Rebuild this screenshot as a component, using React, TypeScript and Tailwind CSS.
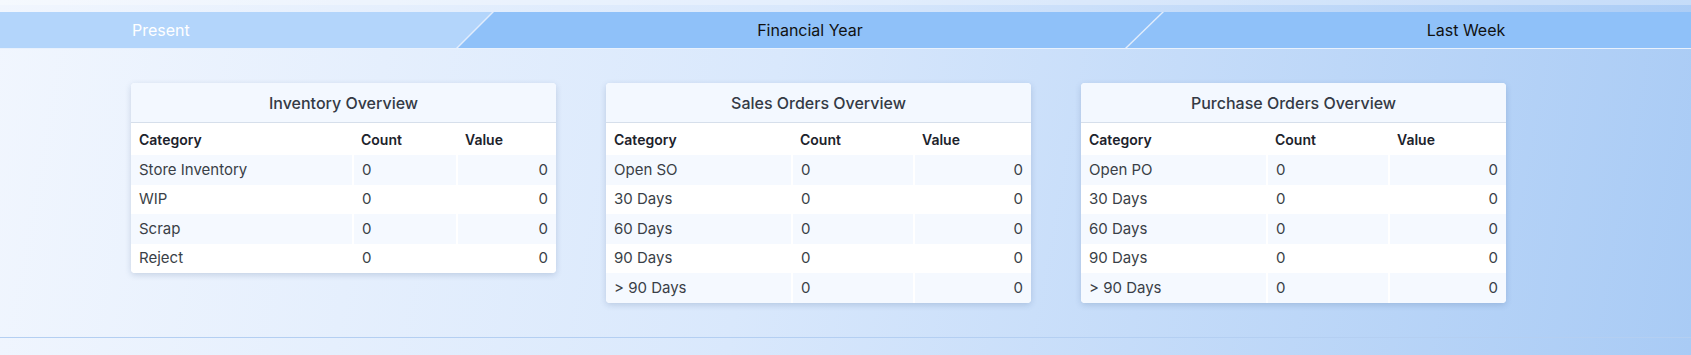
import React from "react";

type Row = { label: string; count: number; value: number };

// Kartendaten
const CARDS: { title: string; cols: [string, string, string]; rows: Row[] }[] = [
  {
    title: "Inventory Overview",
    cols: ["w-[222px]", "w-[104px]", "w-[99px]"],
    rows: [
      { label: "Store Inventory", count: 0, value: 0 },
      { label: "WIP", count: 0, value: 0 },
      { label: "Scrap", count: 0, value: 0 },
      { label: "Reject", count: 0, value: 0 },
    ],
  },
  {
    title: "Sales Orders Overview",
    cols: ["w-[186px]", "w-[122px]", "w-[117px]"],
    rows: [
      { label: "Open SO", count: 0, value: 0 },
      { label: "30 Days", count: 0, value: 0 },
      { label: "60 Days", count: 0, value: 0 },
      { label: "90 Days", count: 0, value: 0 },
      { label: "> 90 Days", count: 0, value: 0 },
    ],
  },
  {
    title: "Purchase Orders Overview",
    cols: ["w-[186px]", "w-[122px]", "w-[117px]"],
    rows: [
      { label: "Open PO", count: 0, value: 0 },
      { label: "30 Days", count: 0, value: 0 },
      { label: "60 Days", count: 0, value: 0 },
      { label: "90 Days", count: 0, value: 0 },
      { label: "> 90 Days", count: 0, value: 0 },
    ],
  },
];

function OverviewCard({ title, cols, rows }: (typeof CARDS)[number]) {
  return (
    <div className="w-[425px] shrink-0 overflow-hidden rounded-[4px] bg-white shadow-[0_2px_6px_rgba(30,60,110,0.18)]">
      <div className="flex h-[40px] items-center justify-center border-b border-[#d6dfeb] bg-[#f3f8ff] text-[16px] font-medium text-[#343a45]">
        {title}
      </div>
      <table className="w-full table-fixed border-collapse">
        <thead>
          <tr className="h-[32px] text-left text-[14px] font-semibold text-[#1c222b]">
            <th className={`${cols[0]} px-2 font-semibold`}>Category</th>
            <th className={`${cols[1]} px-2 font-semibold`}>Count</th>
            <th className={`${cols[2]} px-2 font-semibold`}>Value</th>
          </tr>
        </thead>
        <tbody className="text-[15px] text-[#3a3f47]">
          {rows.map((r, i) => (
            <tr
              key={r.label}
              className={`h-[29.6px] ${i % 2 === 0 ? "bg-[#f5f9ff]" : "bg-white"}`}
            >
              <td className="px-2">{r.label}</td>
              <td className="border-l-2 border-white px-2">{r.count}</td>
              <td className="border-l-2 border-white px-2 text-right">{r.value}</td>
            </tr>
          ))}
        </tbody>
      </table>
    </div>
  );
}

export default function App() {
  return (
    <div className="h-[355px] w-full overflow-hidden bg-[linear-gradient(100deg,#f1f6fe_0%,#d9e8fc_45%,#a9cbf5_100%)] font-['Inter',sans-serif]">
      {/* obere Leiste */}
      <div className="h-[5px] bg-white/30" />
      <div className="h-[7px]" />

      {/* Zeitraum-Tabs */}
      <div className="flex h-[37px] overflow-hidden border-b-[1.5px] border-[#e8f1fd] bg-[#e2edfc] text-[16px]">
        <div className="flex h-[36px] w-[492px] shrink-0 items-center bg-[#b3d5fb] pl-[132px] text-white [clip-path:polygon(0_0,100%_0,calc(100%-36px)_100%,0_100%)]">
          Present
        </div>
        <div className="-ml-[34px] flex h-[36px] w-[704px] shrink-0 items-center justify-center bg-[#8fc1f9] text-[#111] [clip-path:polygon(36px_0,100%_0,calc(100%-37px)_100%,0_100%)]">
          Financial Year
        </div>
        <div className="-ml-[35px] flex h-[36px] flex-1 items-center justify-center bg-[#8fc1f9] pl-[114px] text-[#111] [clip-path:polygon(37px_0,100%_0,100%_100%,0_100%)]">
          Last Week
        </div>
      </div>

      {/* Uebersichtskarten */}
      <div className="flex h-[289px] items-start gap-[50px] border-b border-[#b4cff2] pl-[131px] pt-[34px]">
        {CARDS.map((c) => (
          <OverviewCard key={c.title} {...c} />
        ))}
      </div>
    </div>
  );
}
